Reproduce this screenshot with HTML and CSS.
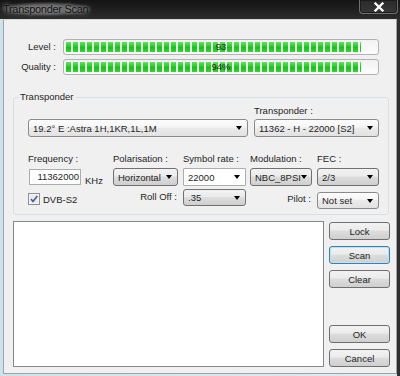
FILE: index.html
```html
<!DOCTYPE html>
<html lang="en">
<head>
    <meta charset="UTF-8">
    <title>Transponder Scan</title>
    <link rel="stylesheet" href="styles.css">
</head>
<body>
    <div class="window">
        <div class="titlebar">
            <span class="title">Transponder Scan</span>
            <span class="close-btn">
                <svg width="12" height="10" viewBox="0 0 12 10">
                    <path d="M2.5 1.5 L9.5 8.5 M9.5 1.5 L2.5 8.5" stroke="#fff" stroke-width="2.3" stroke-linecap="square"/>
                </svg>
            </span>
        </div>

        <div class="client">
            <!-- signal meters -->
            <div class="meters">
                <div class="meter-row">
                    <span class="meter-label">Level :</span>
                    <div class="meter">
                        <div class="meter-fill" style="width: 95%"></div>
                        <span class="meter-text">93</span>
                    </div>
                </div>
                <div class="meter-row">
                    <span class="meter-label">Quality :</span>
                    <div class="meter">
                        <div class="meter-fill" style="width: 95%"></div>
                        <span class="meter-text">94%</span>
                    </div>
                </div>
            </div>

            <fieldset class="group">
                <legend>Transponder</legend>
                <div class="group-body">
                    <div class="row-sat">
                        <div class="combo combo-light sat-combo">
                            <span>19.2° E :Astra 1H,1KR,1L,1M</span><i class="arrow"></i>
                        </div>
                        <div class="tp-col">
                            <span class="lbl">Transponder :</span>
                            <div class="combo combo-light">
                                <span>11362 - H - 22000 [S2]</span><i class="arrow"></i>
                            </div>
                        </div>
                    </div>

                    <div class="params">
                        <div class="field">
                            <span class="lbl">Frequency :</span>
                            <div class="freq">
                                <div class="textbox">11362000</div>
                                <span class="unit">KHz</span>
                            </div>
                        </div>
                        <div class="field">
                            <span class="lbl">Polarisation :</span>
                            <div class="combo w-pol"><span>Horizontal</span><i class="arrow"></i></div>
                        </div>
                        <div class="field">
                            <span class="lbl">Symbol rate :</span>
                            <div class="combo combo-edit w-sym"><span>22000</span><i class="arrow"></i></div>
                        </div>
                        <div class="field">
                            <span class="lbl">Modulation :</span>
                            <div class="combo w-mod"><span>NBC_8PSI</span><i class="arrow"></i></div>
                        </div>
                        <div class="field">
                            <span class="lbl">FEC :</span>
                            <div class="combo w-mod"><span>2/3</span><i class="arrow"></i></div>
                        </div>

                        <div class="check">
                            <svg width="12" height="12" viewBox="0 0 12 12">
                                <rect x="0.5" y="0.5" width="11" height="11" fill="#f4f4f4" stroke="#8e8f8f"/>
                                <rect x="2" y="2" width="8" height="8" fill="#e8ebef"/>
                                <path d="M3 6 L5 8.5 L9.3 3" fill="none" stroke="#4c5e8c" stroke-width="1.6"/>
                            </svg>
                            <span>DVB-S2</span>
                        </div>
                        <span class="side-lbl roll-lbl">Roll Off :</span>
                        <div class="combo short w-sym"><span>.35</span><i class="arrow"></i></div>
                        <span class="side-lbl pilot-lbl">Pilot :</span>
                        <div class="combo combo-light short pilot"><span>Not set</span><i class="arrow"></i></div>
                    </div>
                </div>
            </fieldset>

            <div class="bottom">
                <div class="listbox"></div>
                <div class="buttons">
                    <div class="btn-group">
                        <div class="btn">Lock</div>
                        <div class="btn btn-focus">Scan</div>
                        <div class="btn">Clear</div>
                    </div>
                    <div class="btn-group">
                        <div class="btn">OK</div>
                        <div class="btn">Cancel</div>
                    </div>
                </div>
            </div>
        </div>
    </div>
</body>
</html>
```

FILE: styles.css
```css
body {
    margin: 0;
    font-family: "Liberation Sans", Arial, sans-serif;
    font-size: 9.5px;
    color: #1e1e1e;
}

.window {
    width: 400px;
    height: 376px;
    overflow: hidden;
    background: linear-gradient(90deg, #cbe4eb 0, #dcedf1 397px, #2f2f2f 397px);
}

/* title bar */
.titlebar {
    height: 19px;
    display: flex;
    justify-content: space-between;
    background: linear-gradient(180deg, #141414 0, #222 60%, #2c2c2c 100%);
}

.title {
    margin: 2px 0 3px 1px;
    padding: 0 3px 0 2px;
    line-height: 14px;
    font-size: 11px;
    letter-spacing: -0.3px;
    color: #111;
    background: radial-gradient(ellipse at center, rgba(160, 160, 160, 0.55) 40%, rgba(120, 120, 120, 0) 75%);
    text-shadow: 0 0 3px #9a9a9a, 0 0 6px #8a8a8a;
}

.close-btn {
    width: 39px;
    height: 14px;
    margin-right: 2px;
    box-sizing: border-box;
    border: 1px solid #707070;
    border-top: none;
    border-radius: 0 0 4px 4px;
    box-shadow: inset 0 0 0 1px #1c1c1c;
    background: linear-gradient(180deg, #2a2a2a, #383838);
    display: flex;
    align-items: center;
    justify-content: center;
}

.client {
    margin-left: 3px;
    width: 394px;
    height: 355px;
    box-sizing: border-box;
    border: 1px solid #a2a2a2;
    border-top-color: #d8d8d8;
    background: #f0f0f0;
}

/* meters */
.meters {
    padding-top: 19px;
    display: flex;
    flex-direction: column;
    gap: 4px;
}

.meter-row {
    display: flex;
    align-items: center;
}

.meter-label {
    width: 52px;
    margin-right: 7px;
    text-align: right;
    margin-top: -2px;
}

.meter {
    width: 316px;
    height: 16px;
    box-sizing: border-box;
    padding: 2px;
    border: 1px solid #b2b2b2;
    border-radius: 3px;
    background: linear-gradient(180deg, #f2f2f2, #fcfcfc);
    display: grid;
}

.meter-fill {
    grid-area: 1 / 1;
    height: 10px;
    background:
        repeating-linear-gradient(90deg, transparent 0 5px, #f6f6f6 5px 7px),
        linear-gradient(180deg, #5fe35f 0, #22d022 45%, #14c414 55%, #2fd82f 100%);
}

.meter-text {
    grid-area: 1 / 1;
    justify-self: center;
    align-self: center;
    line-height: 10px;
    color: #2a2a2a;
}

/* transponder group */
.group {
    margin: 16px 7px 0 9px;
    padding: 0;
    border: 1px solid #d5dfe5;
    border-radius: 3px;
    min-width: 0;
}

.group legend {
    margin-left: 4px;
    padding: 0 2px;
    line-height: 12px;
}

.group-body {
    padding: 2px 9px 5px 14px;
}

.lbl {
    line-height: 12px;
    white-space: nowrap;
}

.row-sat {
    display: flex;
    gap: 6px;
    align-items: flex-end;
}

.tp-col {
    width: 125px;
    display: flex;
    flex-direction: column;
    gap: 2px;
}

.sat-combo {
    width: 220px;
}

.combo {
    height: 18px;
    box-sizing: border-box;
    padding: 0 5px 0 4px;
    border: 1px solid #707070;
    border-radius: 3px;
    background: linear-gradient(180deg, #f2f2f2 0, #ebebeb 45%, #dddddd 50%, #cfcfcf 100%);
    display: flex;
    align-items: center;
    justify-content: space-between;
    white-space: nowrap;
}

.combo-light {
    border-color: #8a8a8a;
    background: linear-gradient(180deg, #fdfdfd 0, #f5f5f5 45%, #ebebeb 50%, #e2e2e2 100%);
}

.combo-edit {
    border-color: #abadb3;
    border-radius: 1px;
    background: #fff;
}

.arrow {
    width: 0;
    height: 0;
    border-left: 3.5px solid transparent;
    border-right: 3.5px solid transparent;
    border-top: 4px solid #000;
}

.params {
    margin-top: 16px;
    display: grid;
    grid-template-columns: 85px 70px 67px 67px 62px;
    row-gap: 3px;
    align-items: start;
}

.field {
    display: flex;
    flex-direction: column;
    gap: 3px;
}

.w-pol { width: 65px; }
.w-sym { width: 63px; }
.w-mod { width: 62px; }

.freq {
    display: flex;
    align-items: flex-end;
    gap: 4px;
}

.textbox {
    width: 52px;
    height: 16px;
    margin: 1px 0 0 1px;
    box-sizing: border-box;
    padding-right: 1px;
    border: 1px solid #abadb3;
    background: #fff;
    text-align: right;
    line-height: 14px;
}

.unit {
    line-height: 12px;
    margin-bottom: -2px;
}

.check {
    margin-top: 4px;
    display: flex;
    align-items: center;
    gap: 3px;
}

.side-lbl {
    text-align: right;
    padding-right: 6px;
    line-height: 12px;
}

.roll-lbl { margin-top: 2px; }
.pilot-lbl { margin-top: 4px; }

.short { height: 17px; }

.pilot {
    width: 62px;
    margin-top: 3px;
}

/* list and buttons */
.bottom {
    margin: 6px 0 0 9px;
    display: flex;
    gap: 5px;
}

.listbox {
    width: 311px;
    height: 146px;
    box-sizing: border-box;
    border: 1px solid #828790;
    background: #fff;
}

.buttons {
    width: 61px;
    padding-top: 1px;
    display: flex;
    flex-direction: column;
    justify-content: space-between;
}

.btn-group {
    display: flex;
    flex-direction: column;
    gap: 6px;
}

.btn {
    height: 18px;
    box-sizing: border-box;
    border: 1px solid #707070;
    border-radius: 3px;
    background: linear-gradient(180deg, #f2f2f2 0, #ebebeb 45%, #dddddd 50%, #cfcfcf 100%);
    display: flex;
    align-items: center;
    justify-content: center;
}

.btn-focus {
    border-color: #3c7fb1;
    box-shadow: inset 0 0 0 1px #b7e3f9;
}
```
